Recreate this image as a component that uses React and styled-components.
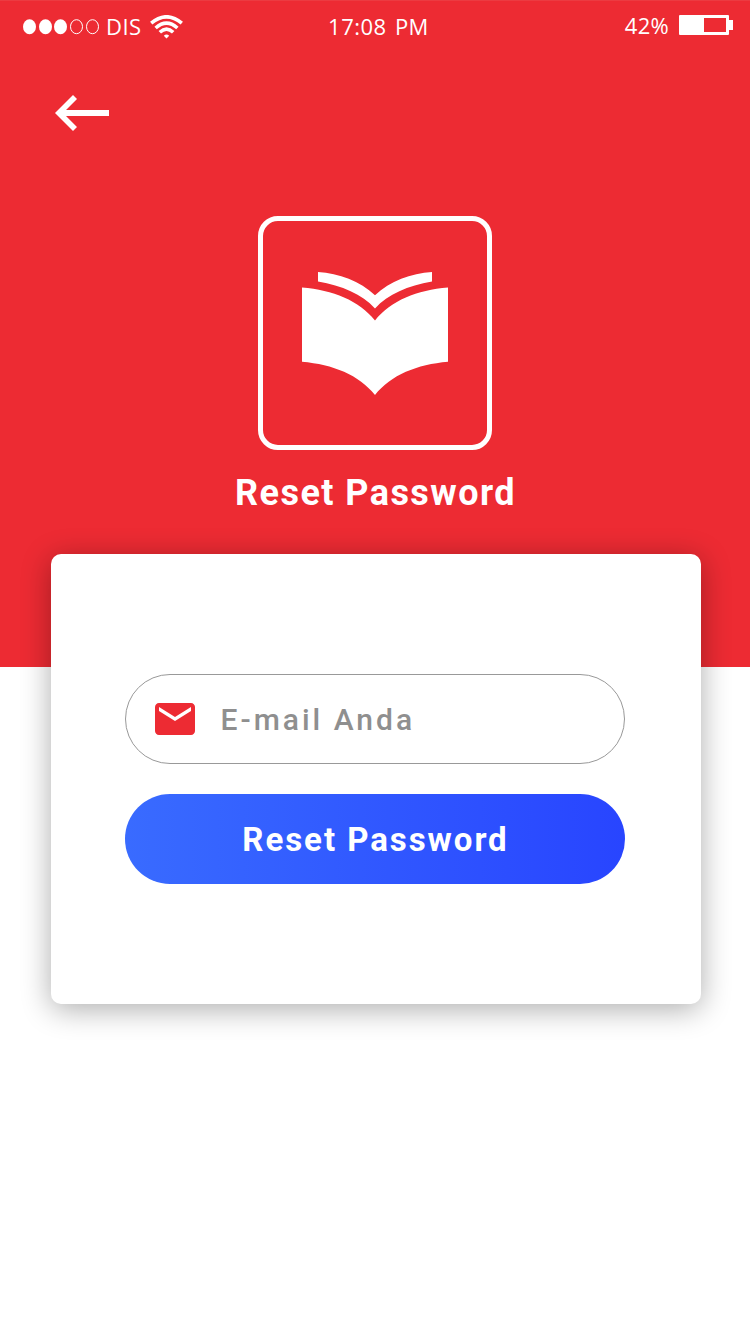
import React from 'react';
import styled, { createGlobalStyle } from 'styled-components';

const RED = '#ed2b33';

const GlobalStyle = createGlobalStyle`
  * { box-sizing: border-box; }
  body { margin: 0; background: #fff; }
`;

const Screen = styled.div`
  width: 750px;
  height: 1334px;
  overflow: hidden;
  background: #fff;
  font-family: Roboto, "Liberation Sans", sans-serif;
`;

const Header = styled.header`
  height: 667px;
  background: ${RED};
  border-top: 1px solid #ec3b41;
  color: #fff;
  display: flex;
  flex-direction: column;
  align-items: center;
`;

const StatusBar = styled.div`
  width: 100%;
  height: 50px;
  padding: 0 17px 0 23px;
  display: grid;
  grid-template-columns: 1fr auto 1fr;
  font: 400 22px/48px "Open Sans", "Noto Sans", sans-serif;
  svg { display: block; flex: none; }
`;

const Carrier = styled.div`
  display: flex;
  padding-top: 1px;
  svg:first-child { margin: 17px 7px 0 0; }
  svg:last-child { margin: 13px 0 0 8.5px; }
`;

const StatusText = styled.span`
  letter-spacing: ${(p) => p.$spacing || 0}px;
  white-space: pre;
`;

const Clock = styled.div`
  padding-top: 1px;
  padding-left: 1px;
  word-spacing: 2px;
`;

const Power = styled.div`
  display: flex;
  justify-content: flex-end;
  svg { margin: 14px 0 0 10px; }
`;

const BackButton = styled.button`
  align-self: flex-start;
  margin: 43px 0 0 54px;
  padding: 0;
  border: 0;
  background: none;
  height: 38px;
  svg { display: block; }
`;

const Logo = styled.div`
  width: 234px;
  height: 234px;
  margin-top: 84px;
  border: 5px solid #fff;
  border-radius: 20px;
  display: flex;
  justify-content: center;
  padding-top: 50px;
`;

const Title = styled.h1`
  margin: 22px 0 0;
  font-size: 36px;
  line-height: 42px;
  font-weight: 700;
  letter-spacing: 1.44px;
  padding-left: 1px;
`;

const Card = styled.form`
  position: relative;
  width: 650px;
  height: 450px;
  margin: -113px 0 0 51px;
  padding: 120px 76px 0 74px;
  background: #fff;
  border-radius: 10px;
  box-shadow: 0 5px 30px rgba(0, 0, 0, 0.33);
  display: flex;
  flex-direction: column;
  gap: 30px;
`;

const Field = styled.label`
  height: 90px;
  border: 1px solid #999;
  border-radius: 45px;
  padding-left: 29px;
  display: flex;
  align-items: center;
  gap: 24px;
  color: #8f8f8f;
  font-size: 30px;
  font-weight: 500;
  letter-spacing: 3px;
  svg { display: block; }
  span { padding-left: 1.5px; }
`;

const SubmitButton = styled.button`
  height: 90px;
  border: 0;
  border-radius: 45px;
  padding: 1px 0 0 1px;
  background: linear-gradient(90deg, #396bff, #2845ff);
  color: #fff;
  font: 700 33px/89px Roboto, "Liberation Sans", sans-serif;
  letter-spacing: 1.95px;
`;

const SignalDots = () => (
  <svg width="76" height="16" viewBox="0 0 76 16" fill="#fff">
    <ellipse cx="6.5" cy="7.7" rx="6.5" ry="7.5" />
    <ellipse cx="22.5" cy="7.7" rx="6.5" ry="7.5" />
    <ellipse cx="37.5" cy="7.7" rx="6.5" ry="7.5" />
    <g fill="none" stroke="#fff">
      <ellipse cx="53.5" cy="7.7" rx="6" ry="7" />
      <ellipse cx="69.5" cy="7.7" rx="6" ry="7" />
    </g>
  </svg>
);

const Wifi = () => (
  <svg width="33" height="24" viewBox="0 0 33 24" fill="none" stroke="#fff" strokeWidth="3.6">
    <path d="M1.2 8.2Q16.5 -4.6 31.8 8.2" />
    <path d="M5.6 13Q16.5 3.4 27.4 13" />
    <path d="M9.8 17.2Q16.5 11 23.2 17.2" />
    <path d="M13.8 20.8Q16.5 18 19.2 20.8L16.5 23.4Z" fill="#fff" stroke="none" />
  </svg>
);

const Battery = () => (
  <svg width="54" height="20" viewBox="0 0 54 20" fill="#fff">
    <path
      fillRule="evenodd"
      d="M1 0H49Q50 0 50 1V5H54V15H50V19Q50 20 49 20H1Q0 20 0 19V1Q0 0 1 0ZM25 3V17H47V3Z"
    />
  </svg>
);

const BackArrow = () => (
  <svg width="56" height="38" viewBox="0 0 56 38" fill="#fff">
    <path d="M1 19L19 1L23 5L12 16H55V22H12L23 33L19 37Z" />
  </svg>
);

const Book = () => (
  <svg width="146" height="124" viewBox="0 0 146 124" fill="#fff">
    <path d="M16 1C37 2.5 58 10 73 24.2C88 10 109 2.5 130 1V10.6C106 14.5 86 23.5 73 37.4C60 23.5 40 14.5 16 10.6Z" />
    <path d="M0 16.5C31 19 57 29.5 73 49.5C89 29.5 115 19 146 16.5V90.8C115 93.5 89 104 73 124C57 104 31 93.5 0 90.8Z" />
  </svg>
);

const Mail = () => (
  <svg width="40" height="32" viewBox="2 4 20 16" fill={RED}>
    <path d="M20 4H4c-1.1 0-1.99.9-1.99 2L2 18c0 1.1.9 2 2 2h16c1.1 0 2-.9 2-2V6c0-1.1-.9-2-2-2zm0 4l-8 5-8-5V6l8 5 8-5v2z" />
  </svg>
);

export default function App() {
  return (
    <Screen>
      <GlobalStyle />
      <Header>
        <StatusBar>
          <Carrier>
            <SignalDots />
            <StatusText $spacing={0.5}>DIS</StatusText>
            <Wifi />
          </Carrier>
          <Clock>
            <StatusText $spacing={0.5}>17:08 PM</StatusText>
          </Clock>
          <Power>
            <StatusText $spacing={0.3}>42%</StatusText>
            <Battery />
          </Power>
        </StatusBar>
        <BackButton type="button" aria-label="Back">
          <BackArrow />
        </BackButton>
        <Logo>
          <Book />
        </Logo>
        <Title>Reset Password</Title>
      </Header>
      <Card>
        <Field>
          <Mail />
          <span>E-mail Anda</span>
        </Field>
        <SubmitButton type="button">Reset Password</SubmitButton>
      </Card>
    </Screen>
  );
}
